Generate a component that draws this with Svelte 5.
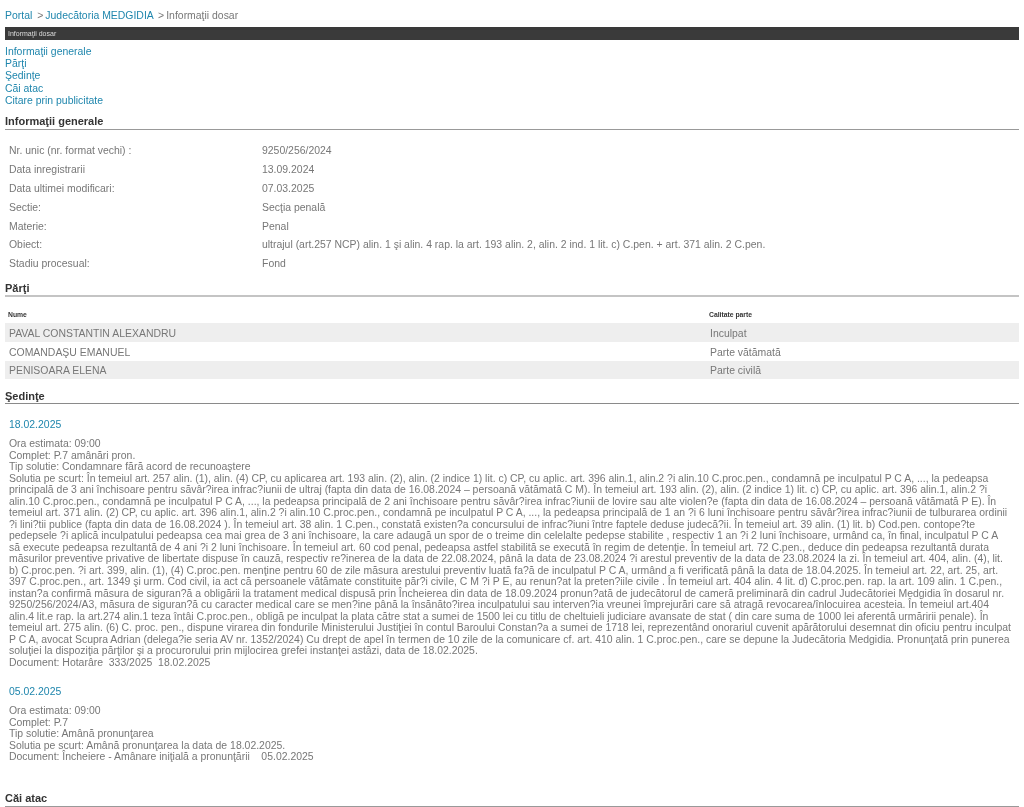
<script>
  const general = [
    ['Nr. unic (nr. format vechi) :', '9250/256/2024'],
    ['Data inregistrarii', '13.09.2024'],
    ['Data ultimei modificari:', '07.03.2025'],
    ['Sectie:', 'Secţia penală'],
    ['Materie:', 'Penal'],
    ['Obiect:', 'ultrajul (art.257 NCP) alin. 1 şi alin. 4 rap. la art. 193 alin. 2, alin. 2 ind. 1 lit. c) C.pen. + art. 371 alin. 2 C.pen.'],
    ['Stadiu procesual:', 'Fond']
  ];

  const parti = [
    ['PAVAL CONSTANTIN ALEXANDRU', 'Inculpat'],
    ['COMANDAŞU EMANUEL', 'Parte vătămată'],
    ['PENISOARA ELENA', 'Parte civilă']
  ];

  const sedinte = [
    {
      data: '18.02.2025',
      lines: [
        'Ora estimata: 09:00',
        'Complet: P.7 amânări pron.',
        'Tip solutie: Condamnare fără acord de recunoaştere',
        'Solutia pe scurt: În temeiul art. 257 alin. (1), alin. (4) CP, cu aplicarea art. 193 alin. (2), alin. (2 indice 1) lit. c) CP, cu aplic. art. 396 alin.1, alin.2 ?i alin.10 C.proc.pen., condamnă pe inculpatul P C A, ..., la pedeapsa',
        'principală de 3 ani închisoare pentru săvâr?irea infrac?iunii de ultraj (fapta din data de 16.08.2024 – persoană vătămată C M). În temeiul art. 193 alin. (2), alin. (2 indice 1) lit. c) CP, cu aplic. art. 396 alin.1, alin.2 ?i',
        'alin.10 C.proc.pen., condamnă pe inculpatul P C A, ..., la pedeapsa principală de 2 ani închisoare pentru săvâr?irea infrac?iunii de lovire sau alte violen?e (fapta din data de 16.08.2024 – persoană vătămată P E). În',
        'temeiul art. 371 alin. (2) CP, cu aplic. art. 396 alin.1, alin.2 ?i alin.10 C.proc.pen., condamnă pe inculpatul P C A, ..., la pedeapsa principală de 1 an ?i 6 luni închisoare pentru săvâr?irea infrac?iunii de tulburarea ordinii',
        '?i lini?tii publice (fapta din data de 16.08.2024 ). În temeiul art. 38 alin. 1 C.pen., constată existen?a concursului de infrac?iuni între faptele deduse judecă?ii. În temeiul art. 39 alin. (1) lit. b) Cod.pen. contope?te',
        'pedepsele ?i aplică inculpatului pedeapsa cea mai grea de 3 ani închisoare, la care adaugă un spor de o treime din celelalte pedepse stabilite , respectiv 1 an ?i 2 luni închisoare, urmând ca, în final, inculpatul P C A',
        'să execute pedeapsa rezultantă de 4 ani ?i 2 luni închisoare. În temeiul art. 60 cod penal, pedeapsa astfel stabilită se execută în regim de detenţie. În temeiul art. 72 C.pen., deduce din pedeapsa rezultantă durata',
        'măsurilor preventive privative de libertate dispuse în cauză, respectiv re?inerea de la data de 22.08.2024, până la data de 23.08.2024 ?i arestul preventiv de la data de 23.08.2024 la zi. În temeiul art. 404, alin. (4), lit.',
        'b) C.proc.pen. ?i art. 399, alin. (1), (4) C.proc.pen. menţine pentru 60 de zile măsura arestului preventiv luată fa?ă de inculpatul P C A, urmând a fi verificată până la data de 18.04.2025. În temeiul art. 22, art. 25, art.',
        '397 C.proc.pen., art. 1349 şi urm. Cod civil, ia act că persoanele vătămate constituite păr?i civile, C M ?i P E, au renun?at la preten?iile civile . În temeiul art. 404 alin. 4 lit. d) C.proc.pen. rap. la art. 109 alin. 1 C.pen.,',
        'instan?a confirmă măsura de siguran?ă a obligării la tratament medical dispusă prin Încheierea din data de 18.09.2024 pronun?ată de judecătorul de cameră preliminară din cadrul Judecătoriei Medgidia în dosarul nr.',
        '9250/256/2024/A3, măsura de siguran?ă cu caracter medical care se men?ine până la însănăto?irea inculpatului sau interven?ia vreunei împrejurări care să atragă revocarea/înlocuirea acesteia. În temeiul art.404',
        'alin.4 lit.e rap. la art.274 alin.1 teza întâi C.proc.pen., obligă pe inculpat la plata către stat a sumei de 1500 lei cu titlu de cheltuieli judiciare avansate de stat ( din care suma de 1000 lei aferentă urmăririi penale). În',
        'temeiul art. 275 alin. (6) C. proc. pen., dispune virarea din fondurile Ministerului Justiţiei în contul Baroului Constan?a a sumei de 1718 lei, reprezentând onorariul cuvenit apărătorului desemnat din oficiu pentru inculpat',
        'P C A, avocat Scupra Adrian (delega?ie seria AV nr. 1352/2024) Cu drept de apel în termen de 10 zile de la comunicare cf. art. 410 alin. 1 C.proc.pen., care se depune la Judecătoria Medgidia. Pronunţată prin punerea',
        'soluţiei la dispoziţia părţilor şi a procurorului prin mijlocirea grefei instanţei astăzi, data de 18.02.2025.',
        'Document: Hotarâre  333/2025  18.02.2025'
      ]
    },
    {
      data: '05.02.2025',
      lines: [
        'Ora estimata: 09:00',
        'Complet: P.7',
        'Tip solutie: Amână pronunţarea',
        'Solutia pe scurt: Amână pronunţarea la data de 18.02.2025.',
        'Document: Încheiere - Amânare iniţială a pronunţării    05.02.2025'
      ]
    }
  ];
</script>

<div class="page">
  <nav class="crumbs">
    <a href="#portal">Portal</a>
    <span class="sep">&gt;</span><a href="#instanta">Judecătoria MEDGIDIA</a>
    <span class="sep">&gt;</span>Informaţii dosar
  </nav>

  <div class="bar">Informaţii dosar</div>

  <ul class="toc">
    <li><a href="#generale">Informaţii generale</a></li>
    <li><a href="#parti">Părţi</a></li>
    <li><a href="#sedinte">Şedinţe</a></li>
    <li><a href="#atac">Căi atac</a></li>
    <li><a href="#citare">Citare prin publicitate</a></li>
  </ul>

  <h2 id="generale">Informaţii generale</h2>
  <div class="general">
    {#each general as [label, value]}
      <div class="row">
        <span>{label}</span>
        <span>{value}</span>
      </div>
    {/each}
  </div>

  <h2 id="parti" class="parti-title">Părţi</h2>
  <table>
    <thead>
      <tr><th>Nume</th><th>Calitate parte</th></tr>
    </thead>
    <tbody>
      {#each parti as [nume, calitate]}
        <tr><td>{nume}</td><td>{calitate}</td></tr>
      {/each}
    </tbody>
  </table>

  <h2 id="sedinte" class="sedinte-title">Şedinţe</h2>
  {#each sedinte as s}
    <section class="sedinta">
      <div class="data">{s.data}</div>
      {#each s.lines as line}
        <div class="line">{line}</div>
      {/each}
    </section>
  {/each}

  <h2 id="atac" class="atac-title">Căi atac</h2>
</div>

<style>
  :global(body) {
    margin: 0;
    background: #fff;
  }

  .page {
    height: 807px;
    overflow: hidden;
    padding: 0 5px;
    font-family: "Liberation Sans", Arial, sans-serif;
    font-size: 10.45px;
    color: #777;
    filter: blur(0.4px);
  }

  a {
    color: #1f86ad;
    text-decoration: none;
  }

  .crumbs {
    height: 27px;
    padding-top: 10px;
    box-sizing: border-box;
    line-height: 12px;
  }

  .sep {
    margin: 0 2px;
  }

  .bar {
    height: 13px;
    line-height: 13px;
    padding-left: 3px;
    background: #3a3a3a;
    color: #ddd;
    font-size: 7px;
  }

  .toc {
    list-style: none;
    margin: 6px 0 0;
    padding: 0;
    line-height: 12.2px;
  }

  h2 {
    margin: 0;
    font-size: 11px;
    font-weight: bold;
    color: #333;
    line-height: 13px;
    padding-bottom: 1px;
    border-bottom: 1px solid #999;
  }

  #generale {
    margin-top: 8px;
  }

  .general {
    padding: 12px 0 0 4px;
  }

  .row {
    display: grid;
    grid-template-columns: 253px 1fr;
    height: 18.9px;
    line-height: 18.9px;
  }

  .parti-title {
    margin-top: 8px;
    padding-bottom: 0;
    border-bottom: 2px solid #c4c4c4;
  }

  table {
    width: 100%;
    border-collapse: collapse;
    margin-top: 9px;
    table-layout: fixed;
  }

  th {
    font-size: 6.8px;
    font-weight: bold;
    color: #333;
    text-align: left;
    padding: 0 0 0 3px;
    height: 17px;
  }

  th:first-child {
    width: 698px;
  }

  td {
    height: 16.7px;
    padding: 2px 0 0 4px;
    white-space: nowrap;
  }

  tbody tr:nth-child(odd) {
    background: #eee;
  }

  .sedinte-title {
    margin-top: 11px;
    padding-bottom: 0;
    border-bottom-color: #8a8a8a;
  }

  .sedinta {
    padding-left: 4px;
    margin-top: 14px;
    line-height: 11.5px;
  }

  .sedinta + .sedinta {
    margin-top: 17px;
  }

  .line {
    white-space: pre;
  }

  .data {
    color: #1f86ad;
    margin-bottom: 7px;
    line-height: 13px;
  }

  .atac-title {
    margin-top: 29px;
  }
</style>
